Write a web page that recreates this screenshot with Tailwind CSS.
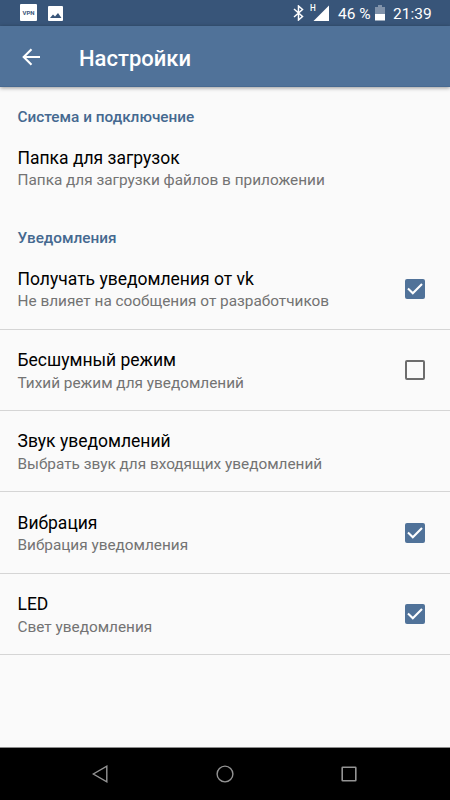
<!DOCTYPE html>
<html lang="ru">

<head>
  <meta charset="UTF-8">
  <meta name="viewport" content="width=device-width, initial-scale=1.0">
  <title>Настройки</title>
  <script src="https://cdn.jsdelivr.net/npm/@tailwindcss/browser@4"></script>
</head>

<body class="bg-[#fafafa] font-[Roboto,sans-serif]">
  <div class="flex flex-col w-[450px] h-[800px] overflow-hidden">
    <!-- Status bar -->
    <div class="flex items-center h-[26px] shrink-0 bg-[#385579] text-white">
      <div class="ml-5 mb-px w-[17px] h-[17px] rounded-[1px] bg-white text-[#385579] text-[6px] font-bold leading-[17px] text-center">VPN</div>
      <svg class="ml-[10.5px]" width="15" height="15" viewBox="0 0 15 15">
        <rect width="15" height="15" rx="1" fill="#fff" />
        <path d="M2 12 5 8.5l2 2L10 7l3.5 5z" fill="#385579" />
      </svg>
      <svg class="ml-[230.5px]" width="11" height="16" viewBox="0 0 11 16" fill="none" stroke="#fff" stroke-width="1.5">
        <path d="M1 4l8.5 7.5L5.5 15V1l4 3.5L1 12" />
      </svg>
      <div class="relative ml-[6px] w-[19px] h-[16px]">
        <span class="absolute left-0 -top-[3px] text-[9px] leading-[12px] font-medium scale-x-90 origin-left">H</span>
        <svg class="absolute right-0 top-0" width="16" height="16" viewBox="0 0 16 16">
          <path d="M16 .5V16H.5z" fill="#fff" />
        </svg>
      </div>
      <span class="ml-[9px] w-[33px] text-[15.5px] leading-[26px] pt-[2px] whitespace-nowrap">46 %</span>
      <svg class="ml-1" width="10" height="16" viewBox="0 0 10 16">
        <path d="M3 0h4v2h3v7H0V2h3z" fill="#8092aa" />
        <path d="M0 9h10v6.5H0z" fill="#fff" />
      </svg>
      <span class="ml-2 text-[15.5px] leading-[26px] pt-[2px]">21:39</span>
    </div>

    <!-- Toolbar -->
    <header class="relative flex items-center h-[61px] shrink-0 bg-[#507299] text-white border-b border-[#486a91] shadow-[0_1px_4px_rgba(0,0,0,0.4)]">
      <svg class="ml-[21.5px] mt-[2px]" width="19" height="18" viewBox="0 0 19 18" fill="none" stroke="#fff" stroke-width="2.1">
        <path d="M18 9H2M9.5 1.2 1.7 9l7.8 7.8" />
      </svg>
      <h1 class="ml-[38.5px] text-[22px] font-medium pt-[4px]">Настройки</h1>
    </header>

    <!-- Preferences -->
    <main class="flex flex-col flex-1">
      <h2 class="h-[40px] pt-[20px] pl-[17.5px] text-[15.35px] leading-5 font-medium text-[#456990]">Система и подключение</h2>
      <div class="h-[81px] px-[17.5px] pt-[19px]">
        <p class="text-[17.5px] leading-6 text-black">Папка для загрузок</p>
        <p class="text-[15.35px] leading-[21px] text-[#737373]">Папка для загрузки файлов в приложении</p>
      </div>
      <h2 class="h-[40px] pt-[20px] pl-[17.5px] text-[15.35px] leading-5 font-medium text-[#456990]">Уведомления</h2>

      <div class="flex justify-between h-[82px] px-[17.5px] pt-[19px] border-b border-[#d5d5d5]">
        <div>
          <p class="text-[17.5px] leading-6 text-black">Получать уведомления от vk</p>
          <p class="text-[15.35px] leading-[21px] text-[#737373]">Не влияет на сообщения от разработчиков</p>
        </div>
        <svg class="mt-3 mr-[7.5px]" width="20" height="20" viewBox="0 0 20 20">
          <rect width="20" height="20" rx="2" fill="#507299" />
          <path d="M3 9.5l4.8 4.7L17 4.9" fill="none" stroke="#fff" stroke-width="2.1" />
        </svg>
      </div>

      <div class="flex justify-between h-[81px] px-[17.5px] pt-[18px] border-b border-[#d5d5d5]">
        <div>
          <p class="text-[17.5px] leading-6 text-black">Бесшумный режим</p>
          <p class="text-[15.35px] leading-[22px] text-[#737373]">Тихий режим для уведомлений</p>
        </div>
        <svg class="mt-3 mr-[7.5px]" width="20" height="20" viewBox="0 0 20 20">
          <rect x="1" y="1" width="18" height="18" rx="1" fill="none" stroke="#6d6d6d" stroke-width="2" />
        </svg>
      </div>

      <div class="h-[81px] px-[17.5px] pt-[18px] border-b border-[#d5d5d5]">
        <p class="text-[17.5px] leading-6 text-black">Звук уведомлений</p>
        <p class="text-[15.35px] leading-[22px] text-[#737373]">Выбрать звук для входящих уведомлений</p>
      </div>

      <div class="flex justify-between h-[82px] px-[17.5px] pt-[19px] border-b border-[#d5d5d5]">
        <div>
          <p class="text-[17.5px] leading-6 text-black">Вибрация</p>
          <p class="text-[15.35px] leading-[21px] text-[#737373]">Вибрация уведомления</p>
        </div>
        <svg class="mt-[11.5px] mr-[7.5px]" width="20" height="20" viewBox="0 0 20 20">
          <rect width="20" height="20" rx="2" fill="#507299" />
          <path d="M3 9.5l4.8 4.7L17 4.9" fill="none" stroke="#fff" stroke-width="2.1" />
        </svg>
      </div>

      <div class="flex justify-between h-[81px] px-[17.5px] pt-[18px] border-b border-[#d5d5d5]">
        <div>
          <p class="text-[17.5px] leading-6 text-black">LED</p>
          <p class="text-[15.35px] leading-[22px] text-[#737373]">Свет уведомления</p>
        </div>
        <svg class="mt-[11.5px] mr-[7.5px]" width="20" height="20" viewBox="0 0 20 20">
          <rect width="20" height="20" rx="2" fill="#507299" />
          <path d="M3 9.5l4.8 4.7L17 4.9" fill="none" stroke="#fff" stroke-width="2.1" />
        </svg>
      </div>
    </main>

    <!-- Navigation bar -->
    <nav class="flex items-center justify-between h-[53px] shrink-0 pl-[92px] pr-[93px] bg-black border-t border-[#8b8b8b]">
      <svg width="16" height="18" viewBox="0 0 16 18" fill="none" stroke="#949494" stroke-width="1.4">
        <path d="M14.8 1.2v15.6L1.3 9z" />
      </svg>
      <svg width="18" height="18" viewBox="0 0 18 18" fill="none" stroke="#949494" stroke-width="1.4">
        <circle cx="9" cy="9" r="7.9" />
      </svg>
      <svg width="16" height="16" viewBox="0 0 16 16" fill="none" stroke="#949494" stroke-width="1.6">
        <rect x="1.2" y="1.2" width="13.6" height="13.6" rx=".5" />
      </svg>
    </nav>
  </div>
</body>

</html>
